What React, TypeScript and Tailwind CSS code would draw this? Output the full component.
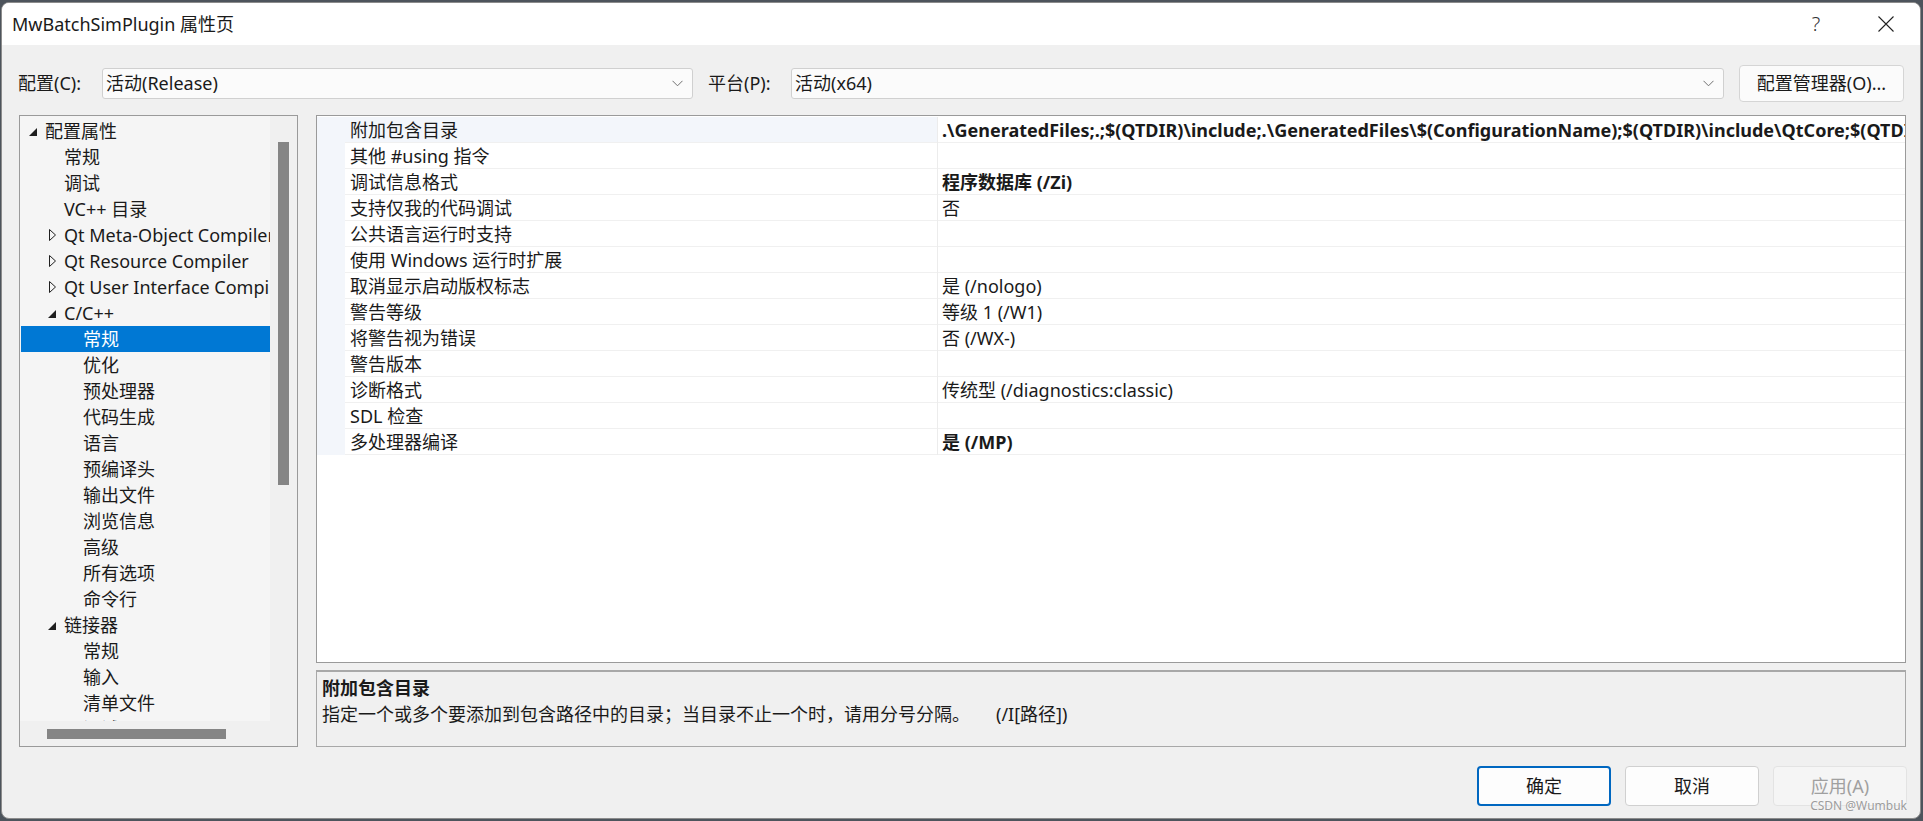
type TreeItem = { label: string; level: 0 | 1 | 2; arrow?: 'open' | 'closed'; selected?: boolean }

const treeItems: TreeItem[] = [
  { label: '配置属性', level: 0, arrow: 'open' },
  { label: '常规', level: 1 },
  { label: '调试', level: 1 },
  { label: 'VC++ 目录', level: 1 },
  { label: 'Qt Meta-Object Compiler', level: 1, arrow: 'closed' },
  { label: 'Qt Resource Compiler', level: 1, arrow: 'closed' },
  { label: 'Qt User Interface Compiler', level: 1, arrow: 'closed' },
  { label: 'C/C++', level: 1, arrow: 'open' },
  { label: '常规', level: 2, selected: true },
  { label: '优化', level: 2 },
  { label: '预处理器', level: 2 },
  { label: '代码生成', level: 2 },
  { label: '语言', level: 2 },
  { label: '预编译头', level: 2 },
  { label: '输出文件', level: 2 },
  { label: '浏览信息', level: 2 },
  { label: '高级', level: 2 },
  { label: '所有选项', level: 2 },
  { label: '命令行', level: 2 },
  { label: '链接器', level: 1, arrow: 'open' },
  { label: '常规', level: 2 },
  { label: '输入', level: 2 },
  { label: '清单文件', level: 2 },
  { label: '调试', level: 2 },
]

const indent = { 0: 'pl-[9px]', 1: 'pl-[28px]', 2: 'pl-[47px]' }

type Prop = { name: string; value: string; bold?: boolean }

const props: Prop[] = [
  {
    name: '附加包含目录',
    value:
      '.\\GeneratedFiles;.;$(QTDIR)\\include;.\\GeneratedFiles\\$(ConfigurationName);$(QTDIR)\\include\\QtCore;$(QTDIR)\\include\\QtGui;$(QTDIR)\\include\\QtWidgets;%(AdditionalIncludeDirectories)',
    bold: true,
  },
  { name: '其他 #using 指令', value: '' },
  { name: '调试信息格式', value: '程序数据库 (/Zi)', bold: true },
  { name: '支持仅我的代码调试', value: '否' },
  { name: '公共语言运行时支持', value: '' },
  { name: '使用 Windows 运行时扩展', value: '' },
  { name: '取消显示启动版权标志', value: '是 (/nologo)' },
  { name: '警告等级', value: '等级 1 (/W1)' },
  { name: '将警告视为错误', value: '否 (/WX-)' },
  { name: '警告版本', value: '' },
  { name: '诊断格式', value: '传统型 (/diagnostics:classic)' },
  { name: 'SDL 检查', value: '' },
  { name: '多处理器编译', value: '是 (/MP)', bold: true },
]

function Chevron() {
  return (
    <svg width="11" height="7" viewBox="0 0 11 7" className="shrink-0">
      <path d="M0.5 0.8 L5.5 5.8 L10.5 0.8" fill="none" stroke="#707070" strokeWidth="1" />
    </svg>
  )
}

function Combo({ text, width }: { text: string; width: string }) {
  return (
    <div
      className={`flex h-[31px] ${width} items-center justify-between rounded-[3px] border border-[#d0d0d0] bg-[#fbfbfb] pl-[3px] pr-[9px]`}
    >
      <span>{text}</span>
      <Chevron />
    </div>
  )
}

function TreeArrow({ kind }: { kind?: 'open' | 'closed' }) {
  if (kind === 'open')
    return (
      <svg width="8" height="8" viewBox="0 0 8 8" className="mt-[2px]">
        <polygon points="8,0 8,8 0,8" fill="#1f1f1f" />
      </svg>
    )
  if (kind === 'closed')
    return (
      <svg width="8" height="12" viewBox="0 0 8 12" className="ml-px">
        <polygon points="0.5,0.5 6.5,6 0.5,11.5" fill="none" stroke="#1f1f1f" strokeWidth="1" />
      </svg>
    )
  return null
}

function ConfigTree() {
  return (
    <div className="flex h-[632px] w-[279px] shrink-0 flex-col border border-[#9a9a9a] bg-[#f0f0f0]">
      <div className="flex h-[605px]">
        <div className="w-[250px] overflow-hidden bg-[#f5f5f5] pt-[2px]">
          {treeItems.map((item, i) => (
            <div
              key={i}
              className={`flex h-[26px] items-center whitespace-nowrap ${indent[item.level]} ${
                item.selected ? 'ml-px bg-[#0078d4] text-white' : 'text-[#1a1a1a]'
              }`}
            >
              <span className="flex w-[16px] shrink-0 items-center">
                <TreeArrow kind={item.arrow} />
              </span>
              <span className={item.selected ? '-ml-px' : ''}>{item.label}</span>
            </div>
          ))}
        </div>
        <div className="flex w-[27px] justify-center pt-[26px]">
          <div className="h-[343px] w-[11px] bg-[#858585]" />
        </div>
      </div>
      <div className="flex h-[25px] items-center pl-[27px]">
        <div className="h-[10px] w-[179px] bg-[#858585]" />
      </div>
    </div>
  )
}

function PropertyGrid() {
  return (
    <div className="h-[548px] overflow-hidden border border-[#9a9a9a] bg-white pt-px">
      {props.map((p, i) => (
        <div key={i} className="flex h-[26px]">
          <div className="w-[28px] shrink-0 bg-[#f3f6fb]" />
          <div
            className={`w-[592px] shrink-0 border-b border-[#f0f0f0] pl-[5px] leading-[26px] ${
              i === 0 ? 'bg-[#f3f6fb]' : ''
            }`}
          >
            {p.name}
          </div>
          <div className="w-px shrink-0 bg-[#ececec]" />
          <div
            className={`min-w-0 flex-1 overflow-hidden whitespace-nowrap border-b border-[#f0f0f0] pl-[4px] leading-[26px] ${
              p.bold ? 'font-bold' : ''
            }`}
          >
            {p.value}
          </div>
        </div>
      ))}
    </div>
  )
}

function DialogButton({
  children,
  variant,
}: {
  children: string
  variant: 'primary' | 'normal' | 'disabled'
}) {
  const styles = {
    primary: 'border-2 border-[#0067c0] bg-[#fdfdfd] text-[#1a1a1a]',
    normal: 'border border-[#d0d0d0] bg-[#fdfdfd] text-[#1a1a1a]',
    disabled: 'border border-[#e3e3e3] bg-[#f5f5f5] text-[#a0a0a0]',
  }
  return (
    <button className={`flex h-[40px] w-[134px] items-center justify-center rounded-[4px] ${styles[variant]}`}>
      {children}
    </button>
  )
}

export default function App() {
  return (
    <div className="h-[821px] w-[1923px] overflow-hidden bg-[#4d545c] pl-px pt-[2px] font-['Noto_Sans','Noto_Sans_CJK_SC',sans-serif] text-[18px] text-[#1a1a1a]">
      <div className="relative flex h-[817px] w-[1920px] flex-col overflow-hidden rounded-[8px] border border-[#8c8c8c] bg-[#f0f0f0]">
        {/* title bar */}
        <div className="flex h-[42px] shrink-0 items-center bg-white pl-[10px] pr-[11px]">
          <span className="text-[18px]">MwBatchSimPlugin 属性页</span>
          <div className="ml-auto flex items-center gap-[24px]">
            <span className="flex w-[46px] justify-center text-[20px] font-light text-[#333]">?</span>
            <span className="flex w-[46px] justify-center">
              <svg width="16" height="16" viewBox="0 0 16 16">
                <path d="M0.5 0.5 L15.5 15.5 M15.5 0.5 L0.5 15.5" stroke="#222" strokeWidth="1.1" />
              </svg>
            </span>
          </div>
        </div>

        {/* configuration row */}
        <div className="mt-[20px] flex h-[37px] shrink-0 items-center pl-[16px]">
          <span className="w-[84px]">配置(C):</span>
          <Combo text="活动(Release)" width="w-[591px]" />
          <span className="ml-[15px] w-[83px]">平台(P):</span>
          <Combo text="活动(x64)" width="w-[933px]" />
          <button className="ml-[15px] h-[37px] w-[165px] rounded-[4px] border border-[#d5d5d5] bg-[#fbfbfb]">
            配置管理器(O)...
          </button>
        </div>

        {/* main */}
        <div className="mt-[13px] flex h-[632px] shrink-0 pl-[17px]">
          <ConfigTree />
          <div className="ml-[18px] flex w-[1590px] flex-col gap-[7px]">
            <PropertyGrid />
            <div className="h-[77px] border border-[#a8a8a8] border-t-2 bg-[#f0f0f0] px-[5px] pt-[3px]">
              <div className="font-bold leading-[26px]">附加包含目录</div>
              <div className="leading-[26px]">
                指定一个或多个要添加到包含路径中的目录；当目录不止一个时，请用分号分隔。
                <span className="ml-[26px]">(/I[路径])</span>
              </div>
            </div>
          </div>
        </div>

        {/* buttons */}
        <div className="mt-[19px] flex shrink-0 justify-end gap-[14px] pr-[13px]">
          <DialogButton variant="primary">确定</DialogButton>
          <DialogButton variant="normal">取消</DialogButton>
          <DialogButton variant="disabled">应用(A)</DialogButton>
        </div>

        <span className="absolute bottom-[3px] right-[13px] text-[12px] text-[#9c9c9c] [text-shadow:0_0_2px_#fff]">
          CSDN @Wumbuk
        </span>
      </div>
    </div>
  )
}
